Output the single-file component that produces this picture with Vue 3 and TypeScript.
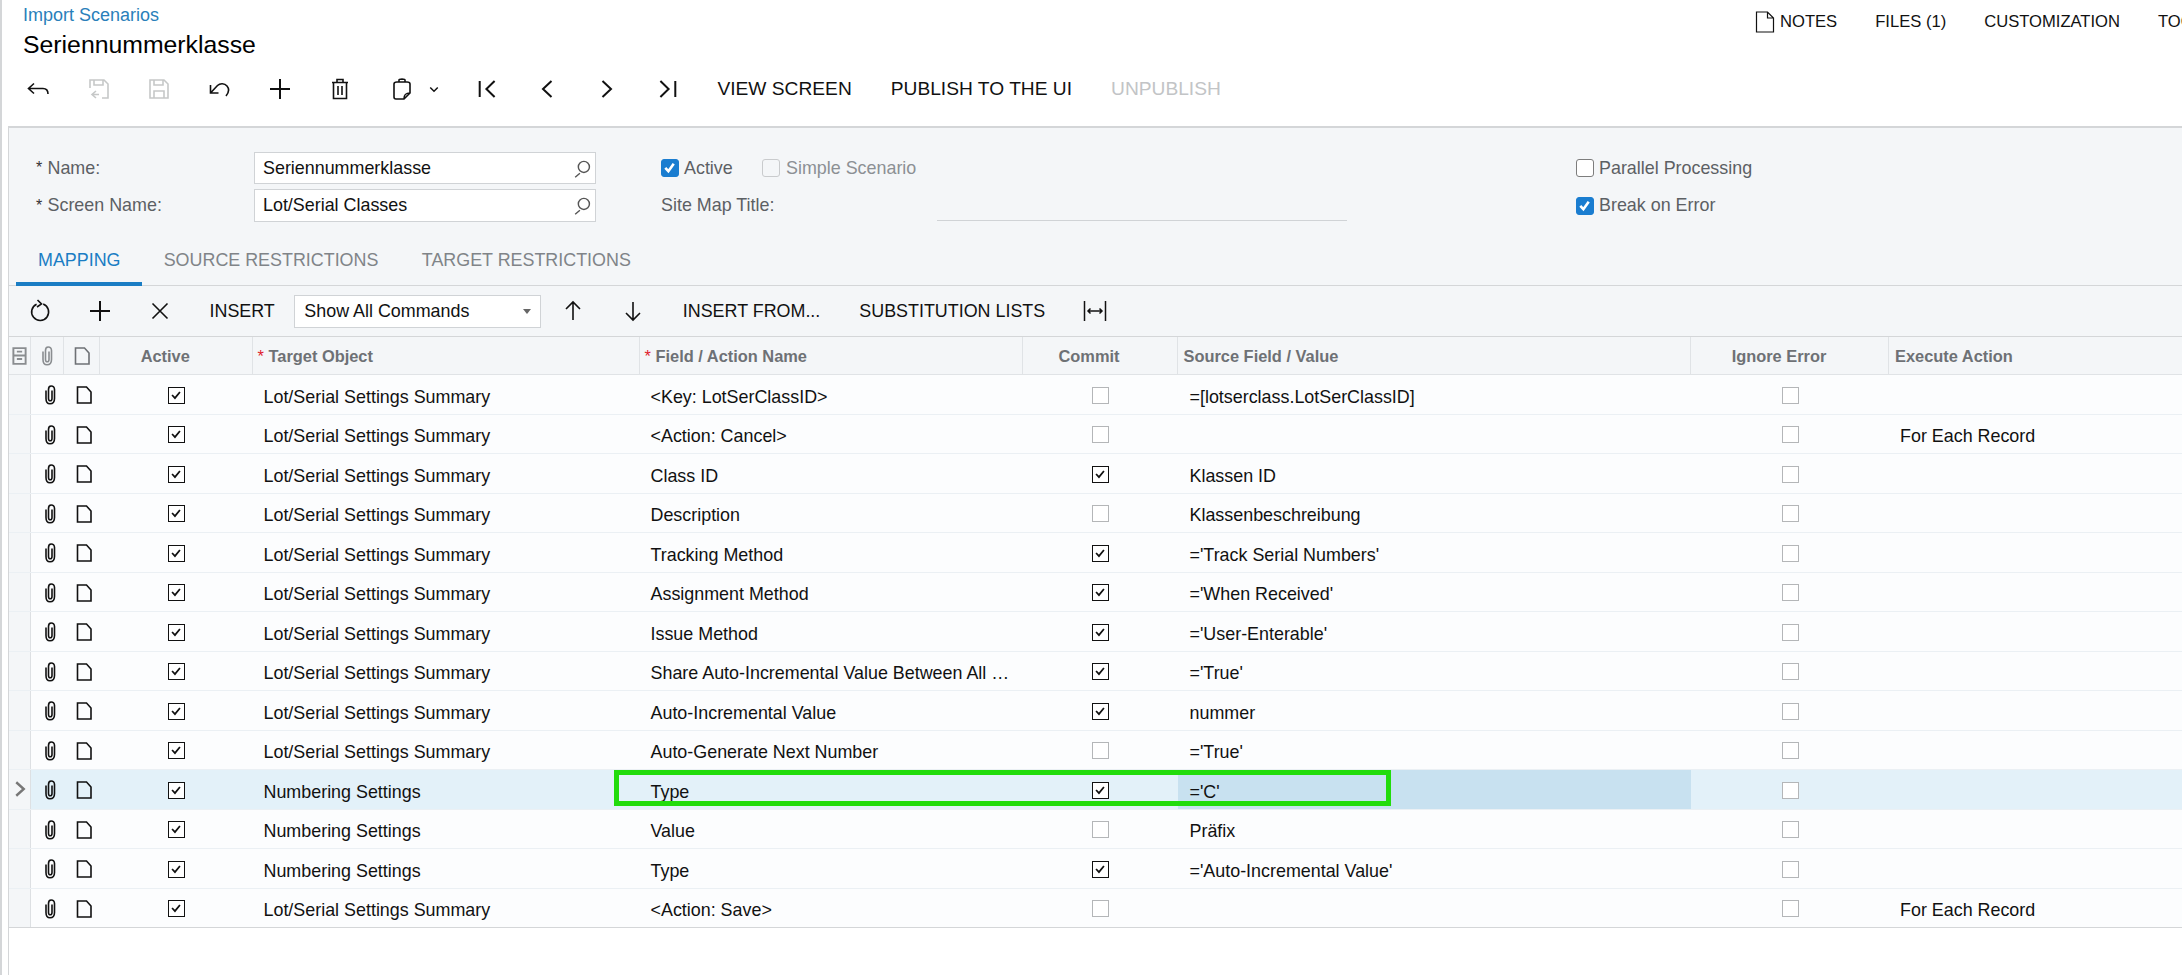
<script setup lang="ts">
interface Row {
  target: string
  field: string
  commit: boolean
  source: string
  action: string
  selected?: boolean
}

const lot = 'Lot/Serial Settings Summary'
const num = 'Numbering Settings'
const each = 'For Each Record'

const rows: Row[] = [
  { target: lot, field: '<Key: LotSerClassID>', commit: false, source: '=[lotserclass.LotSerClassID]', action: '' },
  { target: lot, field: '<Action: Cancel>', commit: false, source: '', action: each },
  { target: lot, field: 'Class ID', commit: true, source: 'Klassen ID', action: '' },
  { target: lot, field: 'Description', commit: false, source: 'Klassenbeschreibung', action: '' },
  { target: lot, field: 'Tracking Method', commit: true, source: "='Track Serial Numbers'", action: '' },
  { target: lot, field: 'Assignment Method', commit: true, source: "='When Received'", action: '' },
  { target: lot, field: 'Issue Method', commit: true, source: "='User-Enterable'", action: '' },
  { target: lot, field: 'Share Auto-Incremental Value Between All …', commit: true, source: "='True'", action: '' },
  { target: lot, field: 'Auto-Incremental Value', commit: true, source: 'nummer', action: '' },
  { target: lot, field: 'Auto-Generate Next Number', commit: false, source: "='True'", action: '' },
  { target: num, field: 'Type', commit: true, source: "='C'", action: '', selected: true },
  { target: num, field: 'Value', commit: false, source: 'Präfix', action: '' },
  { target: num, field: 'Type', commit: true, source: "='Auto-Incremental Value'", action: '' },
  { target: lot, field: '<Action: Save>', commit: false, source: '', action: each },
]

const P = {
  back: 'M8 6.5 2.5 11.5 8 16.5M2.5 11.5H17C20.5 11.5 22 13.5 22 17',
  saveBack: 'M3 11V3H17L21 7V21H15M7 3V8H16V3M9 14 5 17.5 9 21M5 17.5H12',
  save: 'M3 3H17L21 7V21H3ZM7 3V8H16V3M7 21V14H17V21',
  undo: 'M3.5 8V16H11.5M3.5 16 10.5 8.5C13 6 17.5 6 20 9 22.5 12 21.5 16 19 19',
  plus: 'M12 2V22M2 12H22',
  trash: 'M4 5.5H20M9 5V2.5H15V5M5.5 6V21.5H18.5V6M10 9V18M14 9V18',
  paste: 'M7 5C5 5 4 6 4 7V20C4 21 5 22 6 22H14L20 16V7C20 6 19 5 17 5ZM9 5V3C9 1.7 15 1.7 15 3V5M14 22C14 18 15 16 20 16',
  chevron: 'M7 10 12 15 17 10',
  first: 'M4.7 4V20M19.6 4 11.4 12 19.6 20',
  prev: 'M16.5 4 8 12 16.5 20',
  next: 'M7.5 4 16 12 7.5 20',
  last: 'M19.3 4V20M4.4 4 12.6 12 4.4 20',
  refresh: 'M8.6 5.2A8.5 8.5 0 1 0 15.2 5M9.5 1 13.5 5 9 8',
  close: 'M4.5 4.5 19.5 19.5M19.5 4.5 4.5 19.5',
  up: 'M12 3V21M5 10 12 3 19 10',
  down: 'M12 3V21M5 14 12 21 19 14',
  fit: 'M1.5 2V22M22.5 2V22M5 12H19M7.5 9.5 5 12 7.5 14.5M16.5 9.5 19 12 16.5 14.5',
  search: 'M10 18 4 23M15 3A7 7 0 1 0 15 17 7 7 0 1 0 15 3Z',
  clip: 'M8 7.5V15.5C8 19 9.5 20.8 12 20.8S16.5 19 16.5 15.5V6.5C16.5 4 15 3 13.2 3S10.5 4.2 10.5 6.5V15.5C10.5 17 11 17.8 12.2 17.8S14 17 14 15.5V7.5',
  note: 'M5.5 4H14.5L19 9V20H5.5Z',
  notes: 'M3.5 2H14.5L20.5 8V22H3.5ZM14.5 2V8H20.5',
  stack: 'M5 3H19V21H5ZM5 11.5H19M9 7H15M9 15.5H15',
}

const tools1 = [
  { d: P.back }, { d: P.saveBack, off: true }, { d: P.save, off: true }, { d: P.undo }, { d: P.plus, w: 2 }, { d: P.trash },
]
const tools2 = [{ d: P.first }, { d: P.prev }, { d: P.next }, { d: P.last }]
</script>

<template>
  <div class="page">
    <header class="head">
      <div class="titles">
        <a class="crumb">Import Scenarios</a>
        <h1 class="title">Seriennummerklasse</h1>
      </div>
      <nav class="links">
        <svg class="notes-ic" viewBox="0 0 24 24"><path :d="P.notes" /></svg>
        <span>NOTES</span>
        <span>FILES (1)</span>
        <span>CUSTOMIZATION</span>
        <span>TOOLS</span>
      </nav>
    </header>

    <div class="toolbar">
      <button v-for="(t, i) in tools1" :key="i" class="ib" :class="{ off: t.off }">
        <svg viewBox="0 0 24 24" :style="{ strokeWidth: t.w ?? 1.6 }"><path :d="t.d" /></svg>
      </button>
      <button class="ib paste">
        <svg viewBox="0 0 24 24"><path :d="P.paste" /></svg>
        <svg class="chev" viewBox="0 0 24 24"><path :d="P.chevron" /></svg>
      </button>
      <button v-for="(t, i) in tools2" :key="'n' + i" class="ib">
        <svg viewBox="0 0 24 24" class="nav"><path :d="t.d" /></svg>
      </button>
      <button class="tb">VIEW SCREEN</button>
      <button class="tb">PUBLISH TO THE UI</button>
      <button class="tb dim">UNPUBLISH</button>
    </div>

    <main class="panel">
      <section class="form">
        <label class="lbl"><i>*</i>Name:</label>
        <div class="inp"><span>Seriennummerklasse</span><svg viewBox="0 0 24 24"><path :d="P.search" /></svg></div>
        <div class="chk-row span2">
          <span class="cb on"><svg viewBox="0 0 16 16"><path d="M3.5 8.5 6.8 12 12.5 4" /></svg></span>
          <span class="cap w-active">Active</span>
          <span class="cb dis"></span>
          <span class="cap dimcap">Simple Scenario</span>
        </div>
        <div class="chk-row">
          <span class="cb"></span>
          <span class="cap">Parallel Processing</span>
        </div>

        <label class="lbl"><i>*</i>Screen Name:</label>
        <div class="inp"><span>Lot/Serial Classes</span><svg viewBox="0 0 24 24"><path :d="P.search" /></svg></div>
        <div class="chk-row span2">
          <span class="cap site">Site Map Title:</span>
          <span class="line"></span>
        </div>
        <div class="chk-row">
          <span class="cb on"><svg viewBox="0 0 16 16"><path d="M3.5 8.5 6.8 12 12.5 4" /></svg></span>
          <span class="cap">Break on Error</span>
        </div>
      </section>

      <div class="tabs">
        <span class="tab active">MAPPING</span>
        <span class="tab">SOURCE RESTRICTIONS</span>
        <span class="tab">TARGET RESTRICTIONS</span>
      </div>

      <div class="toolbar2">
        <button class="ib"><svg viewBox="0 0 24 24"><path :d="P.refresh" /></svg></button>
        <button class="ib"><svg viewBox="0 0 24 24" style="stroke-width: 2"><path :d="P.plus" /></svg></button>
        <button class="ib"><svg viewBox="0 0 24 24"><path :d="P.close" /></svg></button>
        <button class="tb">INSERT</button>
        <div class="select"><span>Show All Commands</span><b class="caret"></b></div>
        <button class="ib"><svg viewBox="0 0 24 24"><path :d="P.up" /></svg></button>
        <button class="ib"><svg viewBox="0 0 24 24"><path :d="P.down" /></svg></button>
        <button class="tb">INSERT FROM...</button>
        <button class="tb">SUBSTITUTION LISTS</button>
        <button class="ib fit"><svg viewBox="0 0 24 24"><path :d="P.fit" /></svg></button>
      </div>

      <div class="grid">
        <div class="gr hdr">
          <div class="hc ic"><svg class="small gray stack" viewBox="0 0 24 24"><path :d="P.stack" /></svg></div>
          <div class="hc ic"><svg class="small gray" viewBox="0 0 24 24"><path :d="P.clip" /></svg></div>
          <div class="hc ic"><svg class="small" viewBox="0 0 24 24"><path :d="P.note" /></svg></div>
          <div class="hc ctr">Active</div>
          <div class="hc tgt"><em>*</em>Target Object</div>
          <div class="hc fld"><em>*</em>Field / Action Name</div>
          <div class="hc ctr">Commit</div>
          <div class="hc src">Source Field / Value</div>
          <div class="hc ctr">Ignore Error</div>
          <div class="hc exe">Execute Action</div>
        </div>

        <div v-for="(r, i) in rows" :key="i" class="gr row" :class="{ sel: r.selected }">
          <div class="c head-c">
            <svg v-if="r.selected" class="marker" viewBox="0 0 24 24"><path d="M7 3 17 12 7 21" /></svg>
          </div>
          <div class="c ic clipc"><svg class="small" viewBox="0 0 24 24"><path :d="P.clip" /></svg></div>
          <div class="c ic notec"><svg class="small" viewBox="0 0 24 24"><path :d="P.note" /></svg></div>
          <div class="c ctr"><span class="gcb on"><svg viewBox="0 0 16 16"><path d="M3.5 8 6.8 11.5 12.5 4.5" /></svg></span></div>
          <div class="c txt t1">{{ r.target }}</div>
          <div class="c txt t2">{{ r.field }}</div>
          <div class="c ctr">
            <span class="gcb" :class="{ on: r.commit }"><svg v-if="r.commit" viewBox="0 0 16 16"><path d="M3.5 8 6.8 11.5 12.5 4.5" /></svg></span>
          </div>
          <div class="c txt t3" :class="{ cur: r.selected }">{{ r.source }}</div>
          <div class="c ctr"><span class="gcb"></span></div>
          <div class="c txt t4">{{ r.action }}</div>
          <div v-if="r.selected" class="mark"></div>
        </div>
      </div>
    </main>
  </div>
</template>

<style>
html, body { margin: 0; background: #fff; }
</style>

<style scoped>
.page {
  width: 2182px;
  height: 975px;
  box-sizing: border-box;
  overflow: hidden;
  border-left: 2px solid #d4d6d8;
  font-family: "Liberation Sans", Arial, sans-serif;
  font-size: 17.9px;
  color: #111;
  display: flex;
  flex-direction: column;
}
svg {
  fill: none;
  stroke: currentColor;
  stroke-width: 1.6;
  display: block;
}
button {
  font: inherit;
  color: inherit;
  background: none;
  border: 0;
  padding: 0;
}
.head {
  display: flex;
  height: 62px;
  flex: none;
}
.titles {
  width: 1750.5px;
  flex: none;
  padding-left: 21px;
  box-sizing: border-box;
}
.crumb {
  display: block;
  color: #2a7fba;
  font-size: 18px;
  line-height: 19px;
  margin-top: 6px;
}
.title {
  margin: 6px 0 0;
  font-size: 24.8px;
  line-height: 27px;
  font-weight: 400;
  color: #000;
}
.links {
  display: flex;
  align-items: center;
  height: 43px;
  white-space: nowrap;
  gap: 38px;
  font-size: 16.6px;
}
.notes-ic {
  width: 24px;
  height: 24px;
  margin-right: -34.5px;
  stroke-width: 1.2;
}
.toolbar {
  display: flex;
  align-items: center;
  height: 54px;
  padding-left: 6px;
  flex: none;
  margin-bottom: 10px;
}
.ib {
  width: 60.4px;
  height: 30px;
  display: flex;
  align-items: center;
  justify-content: center;
  flex: none;
}
.ib svg { width: 24px; height: 24px; }
.ib.off { color: #c6c8c8; }
.nav { stroke-width: 2; }
.paste { width: 86px; justify-content: flex-start; padding-left: 20px; box-sizing: border-box; }
.paste .chev { width: 18px; height: 18px; margin-left: 11px; stroke-width: 2; }
.tb {
  padding: 0 19.5px;
  height: 30px;
  font-size: 19.2px;
  white-space: nowrap;
  flex: none;
}
.tb.dim { color: #c2c4c6; }
.panel {
  flex: 1;
  margin-left: 6px;
  border-top: 2px solid #d4d6d8;
  border-left: 1px solid #d4d6d8;
  display: flex;
  flex-direction: column;
  min-height: 0;
}
.form {
  background: #f4f6f8;
  display: grid;
  grid-template-columns: 218px 342px 65px 915px 1fr;
  grid-template-rows: 32px 33px;
  row-gap: 5px;
  padding: 24px 0 0 27px;
  height: 111px;
  box-sizing: border-box;
  align-items: center;
  flex: none;
}
.lbl {
  color: #5c6064;
  display: flex;
  align-items: center;
}
.lbl i {
  font-style: normal;
  width: 11.5px;
  color: #333;
  font-size: 16px;
}
.inp {
  background: #fff;
  border: 1px solid #d0d3d6;
  box-sizing: border-box;
  height: 100%;
  display: flex;
  align-items: center;
  justify-content: space-between;
  padding: 0 4px 0 8px;
}
.inp svg { width: 19px; height: 19px; color: #555; stroke-width: 1.8; }
.span2 { grid-column: 3 / 5; padding-left: 65px; }
.chk-row {
  display: flex;
  align-items: center;
  height: 100%;
}
.cb {
  width: 18px;
  height: 18px;
  box-sizing: border-box;
  border: 1.5px solid #7d7d7d;
  border-radius: 3px;
  background: #fff;
  flex: none;
  margin-right: 5px;
}
.cb.on { background: #1a7dd0; border-color: #1a7dd0; color: #fff; }
.cb.on svg { width: 15px; height: 15px; stroke-width: 2.8; }
.cb.dis { border-color: #c9cbcd; background: #f4f6f8; margin-right: 6px; }
.cap { color: #5c6064; white-space: nowrap; }
.w-active { width: 78px; }
.dimcap { color: #8c9094; }
.site { width: 276px; }
.line {
  width: 410px;
  height: 1px;
  background: #d0d3d6;
  align-self: flex-end;
  margin-bottom: 1px;
}
.tabs {
  display: flex;
  height: 47px;
  padding-left: 7px;
  background: #f4f6f8;
  border-bottom: 1px solid #d4d6d8;
  box-sizing: border-box;
  flex: none;
}
.tab {
  color: #808488;
  padding: 11px 21.7px 0;
  box-sizing: border-box;
  margin-bottom: -1px;
  white-space: nowrap;
  font-size: 17.9px;
}
.tab.active {
  color: #1a7dc4;
  border-bottom: 4px solid #1a7dc4;
  width: 126px;
  padding: 11px 22px 0;
}
.toolbar2 {
  display: flex;
  align-items: center;
  height: 51px;
  padding-left: 1px;
  background: #f4f6f8;
  border-bottom: 1px solid #d4d6d8;
  box-sizing: border-box;
  flex: none;
}
.toolbar2 .tb { font-size: 17.9px; padding: 0 19.5px; }
.toolbar2 .ib { width: 60px; }
.toolbar2 .fit svg { stroke-width: 1.5; }
.select {
  width: 247px;
  height: 33px;
  box-sizing: border-box;
  background: #fff;
  border: 1px solid #d0d3d6;
  display: flex;
  align-items: center;
  justify-content: space-between;
  padding: 0 9px;
  flex: none;
  margin-right: 2px;
}
.caret {
  width: 0;
  height: 0;
  border: 4.5px solid transparent;
  border-top: 5px solid #666;
  border-bottom: 0;
}
.gr {
  display: grid;
  grid-template-columns: 22px 33px 36px 152.5px 387px 383px 155px 513.5px 198px 1fr;
}
.hdr {
  height: 38px;
  background: #f4f6f8;
  border-bottom: 1px solid #e0e3e6;
  box-sizing: border-box;
  font-weight: 700;
  color: #6e7175;
  font-size: 16.4px;
}
.hc {
  border-right: 1px solid #e0e3e6;
  display: flex;
  align-items: center;
  white-space: nowrap;
  box-sizing: border-box;
  padding-top: 1px;
}
.hc.ctr { justify-content: center; padding-right: 21px; }
.hc.ic, .c.ic { justify-content: center; display: flex; align-items: center; }
.hc em { font-style: normal; color: #e0202c; margin-right: 3px; width: 8px; font-weight: 400; }
.tgt { padding-left: 5px; }
.fld { padding-left: 5px; }
.src { padding-left: 6px; }
.exe { padding-left: 6px; border-right: 0; }
.small { width: 24px; height: 24px; }
.gray { color: #8a8d90; }
.stack { stroke-width: 2.2; }
.row {
  height: 39.5px;
  box-sizing: border-box;
  border-bottom: 1px solid #ebf0f4;
  position: relative;
  background: #fcfdfe;
}
.row:last-child { border-bottom: 1px solid #d4d6d8; }
.row.sel { background: #e3f1f9; }
.c {
  display: flex;
  align-items: center;
  min-width: 0;
  white-space: nowrap;
}
.c.ctr { justify-content: center; }
.head-c {
  background: #f4f6f8;
  border-right: 1px solid #dde0e3;
  justify-content: center;
}
.marker { width: 18px; height: 18px; color: #777; stroke-width: 3.2; }
.clipc { padding: 2px 0 0 5px; box-sizing: border-box; }
.notec { padding: 2px 0 0 4px; box-sizing: border-box; }
.txt { padding-top: 6px; box-sizing: border-box; }
.t1 { padding-left: 11px; }
.t2 { padding-left: 11px; }
.t3 { padding-left: 12px; }
.t4 { padding-left: 11px; }
.cur { background: #c8e1f0; }
.gcb {
  width: 17px;
  height: 17px;
  box-sizing: border-box;
  border: 1.6px solid #b4b6b8;
  background: #fff;
  margin-top: 2px;
}
.gcb.on { border: 1.6px solid #111; color: #111; }
.gcb.on svg { width: 14px; height: 14px; stroke-width: 2; }
.mark {
  position: absolute;
  left: 605px;
  top: 0;
  width: 777px;
  height: 36px;
  box-sizing: border-box;
  border: 5px solid #22dc0c;
  pointer-events: none;
}
</style>
